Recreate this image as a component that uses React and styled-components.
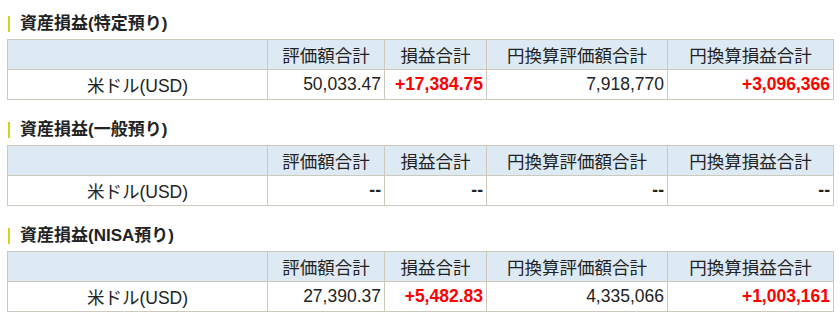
import React from "react";
import styled, { createGlobalStyle } from "styled-components";

const Global = createGlobalStyle`
  html, body { margin: 0; padding: 0; background: #fff; }
  body { font-family: "Liberation Sans", Arial, "Noto Sans CJK JP", sans-serif; color: #222; }
`;

const Page = styled.div`
  padding: 16px 8px 0 7px;
  display: flex;
  flex-direction: column;
  gap: 22px;
`;

const Section = styled.section`
  display: flex;
  flex-direction: column;
  gap: 7px;
`;

const Heading = styled.h2`
  margin: 0 0 0 1px;
  display: flex;
  align-items: center;
  gap: 10px;
  height: 16px;
  font-size: 17px;
  font-weight: bold;
  color: #222;
  line-height: 16px;
  white-space: nowrap;
  &::before {
    content: "";
    width: 2px;
    height: 16px;
    background: #d2d31c;
    flex: none;
  }
`;

const Table = styled.table`
  border-collapse: collapse;
  table-layout: fixed;
  width: 826px;
  font-size: 17.5px;
`;

const HeadCell = styled.th`
  background: #dde9f3;
  border: 1px solid #cdc9bd;
  height: 29px;
  padding: 0;
  font-weight: normal;
  text-align: center;
  color: #222;
`;

const Cell = styled.td`
  border: 1px solid #cdc9bd;
  height: 29px;
  padding: 0 ${(p) => (p.$center ? "0" : "3px")} 0 0;
  text-align: ${(p) => (p.$center ? "center" : "right")};
  color: ${(p) => (p.$gain ? "#ff0000" : "#222")};
  font-weight: ${(p) => (p.$gain || p.$dash ? "bold" : "normal")};
  white-space: nowrap;
`;

const widths = [260, 117, 102, 181, 166];
const headers = ["", "評価額合計", "損益合計", "円換算評価額合計", "円換算損益合計"];

const sections = [
  { title: "資産損益(特定預り)", values: ["50,033.47", "+17,384.75", "7,918,770", "+3,096,366"] },
  { title: "資産損益(一般預り)", values: ["--", "--", "--", "--"] },
  { title: "資産損益(NISA預り)", values: ["27,390.37", "+5,482.83", "4,335,066", "+1,003,161"] },
];

export default function App() {
  return (
    <>
      <Global />
      <Page>
        {sections.map((s) => (
          <Section key={s.title}>
            <Heading>{s.title}</Heading>
            <Table>
              <colgroup>
                {widths.map((w, i) => (
                  <col key={i} style={{ width: w }} />
                ))}
              </colgroup>
              <thead>
                <tr>
                  {headers.map((h, i) => (
                    <HeadCell key={i}>{h}</HeadCell>
                  ))}
                </tr>
              </thead>
              <tbody>
                <tr>
                  <Cell $center>米ドル(USD)</Cell>
                  {s.values.map((v, i) => (
                    <Cell key={i} $gain={v.startsWith("+")} $dash={v === "--"}>
                      {v}
                    </Cell>
                  ))}
                </tr>
              </tbody>
            </Table>
          </Section>
        ))}
      </Page>
    </>
  );
}
